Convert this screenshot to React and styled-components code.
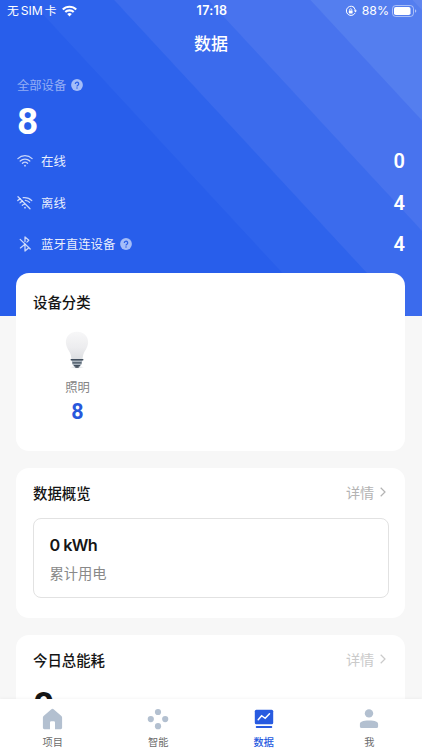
import styled, { createGlobalStyle } from "styled-components";

const GlobalStyle = createGlobalStyle`
* { box-sizing: border-box; }
body {
  margin: 0;
  font-family: Inter, "Noto Sans CJK SC", sans-serif;
  color: #151515;
}
svg { display: block; flex: none; }
`;

const Phone = styled.div`
width: 422px;
height: 750px;
display: flex;
flex-direction: column;
overflow: hidden;
background: #f7f7f7;
`;

const Content = styled.main`
height: 699px;
overflow: hidden;
background: linear-gradient(47.2deg,
  #285eeb 236px, #2e63ec 237px, #2e63ec 298px,
  #3b6bed 299px, #3b6bed 367px,
  #4873ee 368px, #4873ee 442px,
  #547eef 443px, #547eef 517px, #6086f0 518px) top / 422px 316px no-repeat;
`;

const StatusBar = styled.div`
height: 22px;
display: grid;
grid-template-columns: 1fr auto 1fr;
align-items: center;
padding: 0 5px 0 7px;
color: #fff;
font-size: 12.5px;
line-height: 22px;
`;

const StatusSide = styled.div`
display: flex;
align-items: center;
justify-content: ${(p) => (p.$end ? "flex-end" : "flex-start")};
gap: ${(p) => (p.$end ? "0" : "5.5px")};
`;

const Carrier = styled.span`
display: flex;
gap: 2px;
font-size: 11.8px;
white-space: nowrap;
`;

const Latin = styled.span`
font-size: 12.2px;
letter-spacing: -0.1px;
`;

const Clock = styled.span`
font-weight: 600;
font-size: 12.5px;
letter-spacing: 0.3px;
`;

const Battery = styled.span`
margin: 0 3px 0 5px;
font-size: 12.3px;
`;

const PageTitle = styled.h1`
margin: 0;
height: 42px;
line-height: 44px;
text-align: center;
color: #fff;
font-size: 17px;
font-weight: 500;
`;

const Summary = styled.section`
height: 209px;
padding: 12px 17px 0;
color: #fff;
`;

const SummaryLabel = styled.div`
display: flex;
align-items: center;
gap: 5px;
height: 18px;
font-size: 12.3px;
color: rgba(255, 255, 255, 0.5);
`;

const Total = styled.div`
height: 46px;
line-height: 55px;
font-family: Roboto, sans-serif;
font-size: 37px;
font-weight: 700;
`;

const StatRow = styled.div`
height: 41.8px;
display: flex;
align-items: center;
`;

const StatIcon = styled.span`
width: 24px;
color: rgba(255, 255, 255, 0.75);
`;

const StatName = styled.span`
margin-right: 5px;
font-size: 12.4px;
color: rgba(255, 255, 255, 0.92);
`;

const StatValue = styled.span`
margin-left: auto;
font-family: Roboto, sans-serif;
font-size: 20px;
font-weight: 600;
`;

const Card = styled.section`
width: 389px;
height: ${(p) => p.$height}px;
margin: 0 0 17px 16.4px;
padding: 0 16.6px;
border-radius: 13px;
background: #fff;
`;

const CardHead = styled.div`
height: ${(p) => p.$height || 50}px;
padding-bottom: 2px;
display: flex;
align-items: center;
justify-content: space-between;
`;

const CardTitle = styled.h2`
margin: 0;
font-size: 14.4px;
font-weight: 500;
`;

const More = styled.span`
display: flex;
align-items: center;
gap: 6px;
padding-right: 2.5px;
font-size: 14.2px;
color: ${(p) => (p.$faint ? "#cacaca" : "#b3b3b3")};
`;

const Category = styled.div`
width: 89px;
display: flex;
flex-direction: column;
align-items: center;
`;

const CategoryName = styled.span`
margin-top: 8px;
line-height: 20px;
font-size: 12.3px;
color: #858585;
`;

const CategoryCount = styled.span`
line-height: 28px;
font-family: Roboto, sans-serif;
font-size: 21.5px;
font-weight: 700;
color: #2858dc;
`;

const UsageBox = styled.div`
height: 80px;
padding: 13px 15.5px;
border: 1px solid #e2e2e2;
border-radius: 8px;
`;

const UsageValue = styled.div`
height: 28px;
line-height: 27px;
font-family: Inter, sans-serif;
font-size: 16.3px;
font-weight: 600;
letter-spacing: -0.6px;
`;

const UsageName = styled.div`
height: 28px;
line-height: 28px;
font-size: 14.3px;
color: #898989;
`;

const Energy = styled.div`
line-height: 41px;
font-family: Roboto, sans-serif;
font-size: 37px;
font-weight: 700;
`;

const TabBar = styled.nav`
height: 51px;
display: grid;
grid-template-columns: repeat(4, 1fr);
background: #fff;
box-shadow: 0 -1px 3px rgba(0, 0, 0, 0.04);
`;

const Tab = styled.div`
display: flex;
flex-direction: column;
align-items: center;
padding-top: 8px;
font-size: 10.2px;
line-height: 16px;
font-weight: ${(p) => (p.$active ? 500 : 400)};
color: ${(p) => (p.$active ? "#285be0" : "#6b6b6b")};
`;

const TabLabel = styled.span`
margin-top: 3px;
`;

const Help = () => (
  <svg width="12" height="12" viewBox="0 0 12 12">
    <circle cx="6" cy="6" r="5.9" fill="#a5bdf8" />
    <path d="M4.3 4.9a1.7 1.7 0 1 1 2.6 1.4c-.6.4-.9.6-.9 1.2" fill="none" stroke="#2b60e8" strokeWidth="1.2" />
    <circle cx="6" cy="9" r=".75" fill="#2b60e8" />
  </svg>
);

const WifiStatus = () => (
  <svg width="15" height="12" viewBox="0 0 15 12" fill="none" stroke="#fff" strokeWidth="2.1">
    <path d="M.8 4.5a9.4 9.4 0 0 1 13.4 0" />
    <path d="M3.3 7.1a5.9 5.9 0 0 1 8.4 0" />
    <path d="M7.5 11.4 5.2 9.1a3.3 3.3 0 0 1 4.6 0Z" fill="#fff" stroke="none" />
  </svg>
);

const RotationLock = () => (
  <svg width="12" height="12" viewBox="0 0 12 12" fill="none" stroke="#fff">
    <path d="M9.7 3.1a4.6 4.6 0 1 0 .3 5" strokeWidth="1" />
    <path d="M8.4 2.3a4.6 4.6 0 0 1 2 3.8" strokeWidth="1" />
    <path d="m8.8 5.4 1.7 2 1.4-2Z" fill="#fff" stroke="none" />
    <rect x="3.8" y="5.4" width="3.8" height="3" rx=".4" fill="#fff" stroke="none" />
    <path d="M4.6 5.6v-.8a1.1 1.1 0 0 1 2.2 0v.8" strokeWidth=".8" />
  </svg>
);

const BatteryIcon = () => (
  <svg width="25" height="12" viewBox="0 0 25 12">
    <rect x=".5" y=".5" width="21" height="11" rx="3.2" fill="none" stroke="#fff" strokeOpacity=".5" />
    <rect x="2" y="2" width="16.5" height="8" rx="1.8" fill="#fff" />
    <path d="M23 4.2v3.6q1.3-.5 1.3-1.8T23 4.2Z" fill="#fff" opacity=".55" />
  </svg>
);

const Wifi = ({ off }) => (
  <svg width="16" height="14" viewBox="0 0 16 14" fill="none" stroke="currentColor" strokeWidth="1.3" strokeLinecap="round">
    {off ? (
      <>
        <path d="M6.2 1.7c3-.4 6.3.6 8.6 2.9" />
        <path d="M8.3 4.4c1.6.1 3.1.8 4.3 2" />
        <path d="M.8 4.5a10 10 0 0 1 2.4-1.7" />
        <path d="M3 6.9a7 7 0 0 1 2.5-1.7" />
        <path d="M5.3 9.3a4 4 0 0 1 2.4-1.2" />
        <path d="m1 .8 12 12" />
      </>
    ) : (
      <>
        <path d="M.9 4.6a10.2 10.2 0 0 1 14.2 0" />
        <path d="M3.2 7a7 7 0 0 1 9.6 0" />
        <path d="M5.4 9.3a3.8 3.8 0 0 1 5.2 0" />
      </>
    )}
    <circle cx="8" cy="11.7" r=".9" fill="currentColor" stroke="none" />
  </svg>
);

const Bluetooth = () => (
  <svg width="16" height="16" viewBox="0 0 16 16" fill="none" stroke="currentColor" strokeWidth="1.3" strokeLinecap="round" strokeLinejoin="round">
    <path d="M8 5.5V1l3.8 3.2-1.9 1.9" />
    <path d="M3.2 3.4 13.2 13" />
    <path d="M3.4 11.9 8 8.2V15l3.2-2.7" />
  </svg>
);

const Bulb = () => (
  <svg width="24" height="39" viewBox="0 0 24 39">
    <defs>
      <linearGradient id="glass" x1="0" y1="0" x2="0" y2="1">
        <stop offset="0" stopColor="#f7f7f8" />
        <stop offset=".55" stopColor="#ededef" />
        <stop offset="1" stopColor="#dcdee1" />
      </linearGradient>
      <radialGradient id="shade">
        <stop offset="0" stopColor="#c9ced4" />
        <stop offset="1" stopColor="#fff" />
      </radialGradient>
    </defs>
    <ellipse cx="12" cy="36.3" rx="7" ry="1.5" fill="url(#shade)" />
    <path d="M12 .7C5.3.7.9 5.2.9 11c0 4.8 2.6 7.8 4.2 11 .9 1.9 1.2 4.2 1.5 7h10.800c.3-2.800.6-5.100 1.500-7 1.600-3.200 4.200-6.200 4.200-11C23.100 5.200 18.700.7 12 .7Z" fill="url(#glass)" />
    <path d="M6.6 29h10.800l-1 4.500-2.400 2.800h-4l-2.400-2.800Z" fill="#aab4be" />
    <path d="M6.2 28.800h11.600M7.900 31.900h8.200M9.400 34.600h5.200" stroke="#43505f" strokeWidth="1.4" strokeLinecap="round" />
    <path d="M10.300 36h3.400" stroke="#303b48" strokeWidth="1.4" />
  </svg>
);

const Chevron = () => (
  <svg width="6" height="10" viewBox="0 0 6 10" fill="none" stroke="currentColor" strokeWidth="1.2">
    <path d="m.7.8 4.3 4.2L.7 9.2" />
  </svg>
);

const HomeIcon = () => (
  <svg width="21" height="24" viewBox="0 0 21 24">
    <path d="M9.400 2.200 1.600 8.900q-.7.600-.7 1.500v10.400q0 1.400 1.400 1.400H8v-6.800q0-1.200 1.200-1.200h2.600q1.200 0 1.200 1.200v6.800h5.700q1.400 0 1.400-1.400V10.400q0-.9-.7-1.500l-7.800-6.700q-1.100-.9-2.200 0Z" fill="#b3c0d0" />
  </svg>
);

const SmartIcon = () => (
  <svg width="22" height="24" viewBox="0 0 22 24" fill="#b3c0d0">
    <circle cx="11" cy="5" r="3.1" />
    <circle cx="3.8" cy="12.1" r="3.1" />
    <circle cx="18.2" cy="12.1" r="3.1" />
    <circle cx="11" cy="19.2" r="3.1" />
  </svg>
);

const DataIcon = () => (
  <svg width="20" height="24" viewBox="0 0 20 24">
    <rect x=".8" y="2.8" width="18.4" height="14.4" rx="1.5" fill="#285be0" />
    <path d="m4.200 12.700 3.400-4 3.600 2.600 4.300-4.600" fill="none" stroke="#fff" strokeWidth="1.5" strokeLinecap="round" />
    <rect x="1.8" y="19" width="16.400" height="2" rx=".7" fill="#285be0" />
  </svg>
);

const MeIcon = () => (
  <svg width="20" height="24" viewBox="0 0 20 24" fill="#b3c0d0">
    <circle cx="10" cy="6.400" r="4.200" />
    <path d="M.9 17.200c0-2.500 2.700-3.700 9.100-3.700s9.100 1.200 9.100 3.700v2.200q0 1.700-1.700 1.700H2.600q-1.700 0-1.700-1.700Z" />
  </svg>
);

const stats = [
  { name: "在线", value: 0, icon: <Wifi /> },
  { name: "离线", value: 4, icon: <Wifi off /> },
  { name: "蓝牙直连设备", value: 4, icon: <Bluetooth />, help: true },
];

const tabs = [
  { name: "项目", icon: <HomeIcon /> },
  { name: "智能", icon: <SmartIcon /> },
  { name: "数据", icon: <DataIcon />, active: true },
  { name: "我", icon: <MeIcon /> },
];

const App = () => {
  return (
    <>
      <GlobalStyle />
      <Phone>
        <Content>
          <StatusBar>
            <StatusSide>
              <Carrier>
                无<Latin>SIM</Latin>卡
              </Carrier>
              <WifiStatus />
            </StatusSide>
            <Clock>17:18</Clock>
            <StatusSide $end>
              <RotationLock />
              <Battery>88%</Battery>
              <BatteryIcon />
            </StatusSide>
          </StatusBar>
          <PageTitle>数据</PageTitle>

          <Summary>
            <SummaryLabel>
              全部设备 <Help />
            </SummaryLabel>
            <Total>8</Total>
            {stats.map((stat) => (
              <StatRow key={stat.name}>
                <StatIcon>{stat.icon}</StatIcon>
                <StatName>{stat.name}</StatName>
                {stat.help && <Help />}
                <StatValue>{stat.value}</StatValue>
              </StatRow>
            ))}
          </Summary>

          <Card $height={178}>
            <CardHead $height={58}>
              <CardTitle>设备分类</CardTitle>
            </CardHead>
            <Category>
              <Bulb />
              <CategoryName>照明</CategoryName>
              <CategoryCount>8</CategoryCount>
            </Category>
          </Card>

          <Card $height={150}>
            <CardHead>
              <CardTitle>数据概览</CardTitle>
              <More>
                详情 <Chevron />
              </More>
            </CardHead>
            <UsageBox>
              <UsageValue>0 kWh</UsageValue>
              <UsageName>累计用电</UsageName>
            </UsageBox>
          </Card>

          <Card $height={150}>
            <CardHead>
              <CardTitle>今日总能耗</CardTitle>
              <More $faint>
                详情 <Chevron />
              </More>
            </CardHead>
            <Energy>0</Energy>
          </Card>
        </Content>

        <TabBar>
          {tabs.map((tab) => (
            <Tab key={tab.name} $active={tab.active}>
              {tab.icon}
              <TabLabel>{tab.name}</TabLabel>
            </Tab>
          ))}
        </TabBar>
      </Phone>
    </>
  );
};

export default App;
